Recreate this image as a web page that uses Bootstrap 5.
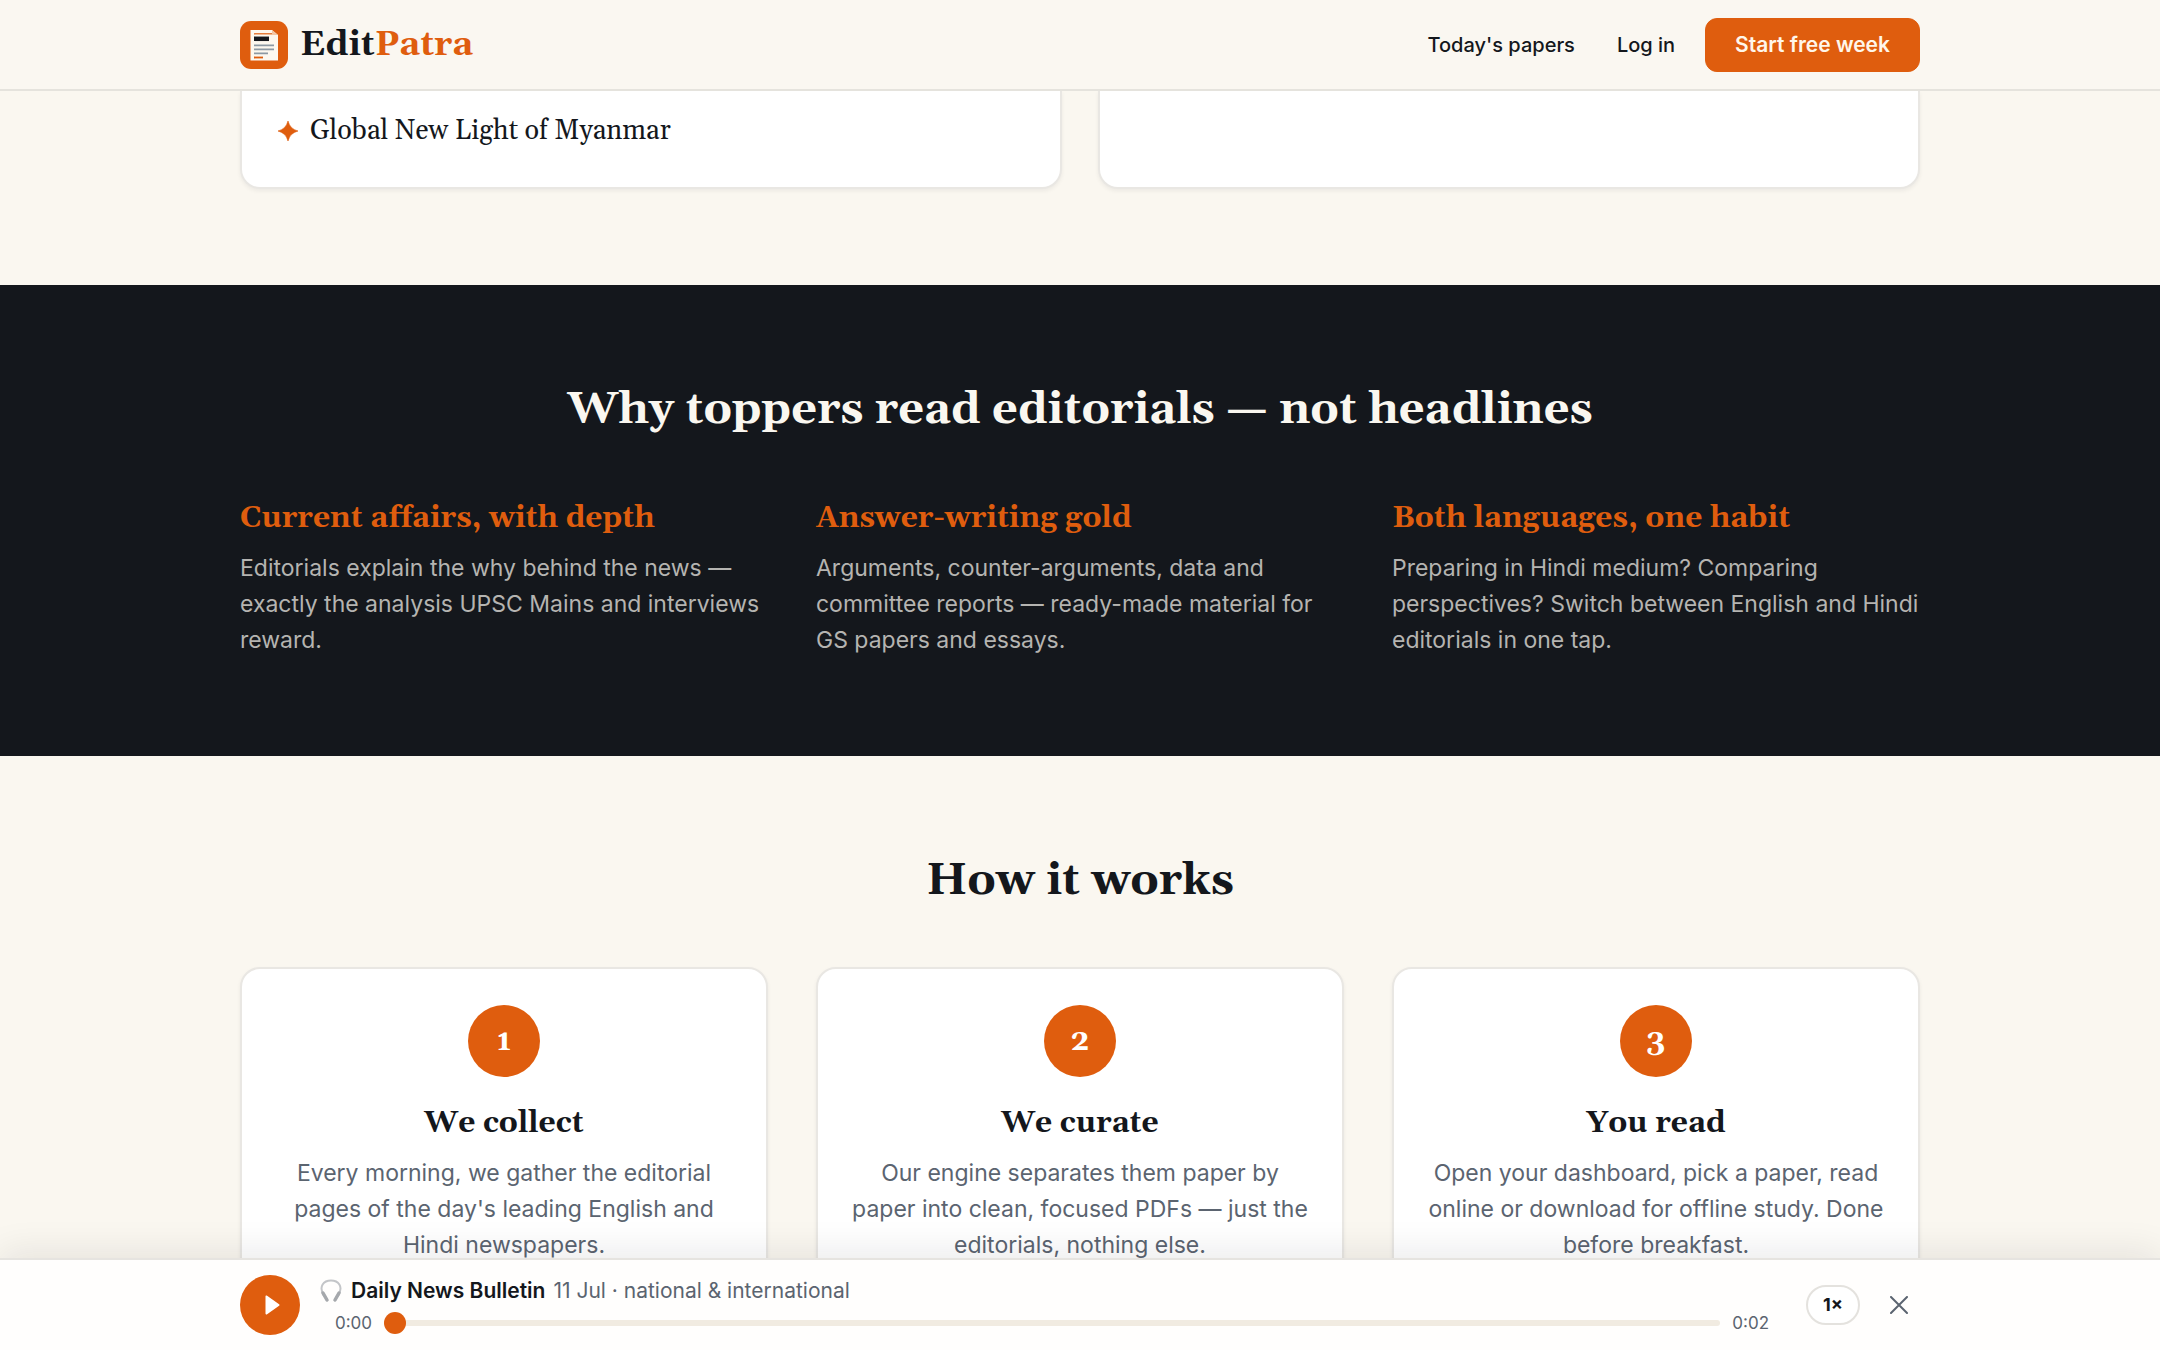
<!DOCTYPE html>
<html lang="en">
<head>
<meta charset="utf-8">
<meta name="viewport" content="width=device-width, initial-scale=1">
<title>EditPatra</title>
<link href="https://cdn.jsdelivr.net/npm/bootstrap@5.3.0/dist/css/bootstrap.min.css" rel="stylesheet">
<style>
:root{--ink:#14171c;--accent:#df5d0e;--paper:#faf7f0;--muted-ink:#5b6470}
body{background:var(--paper);color:var(--ink);font-family:Inter,"Liberation Sans",sans-serif;font-size:23px;line-height:36px}
.wrap{width:100%;max-width:1728px;padding:0 24px;margin:0 auto}
.serif{font-family:Gelasio,Georgia,"Liberation Serif",serif}
.topbar{background:#faf7f1;border-bottom:2px solid #e5e3dd}
.topbar .wrap{min-height:89px}
.brand{font-size:35px;line-height:48px;font-weight:700;color:var(--ink);text-decoration:none}
.brand em{font-style:normal;color:var(--accent)}
.toplink{font-size:20px;line-height:30px;font-weight:500;color:var(--ink);text-decoration:none}
.top-links{gap:42px;margin-right:30px}
.btn-accent{--bs-btn-bg:var(--accent);--bs-btn-color:#fff6ea;--bs-btn-border-color:var(--accent);--bs-btn-hover-bg:#c9520a;--bs-btn-hover-color:#fff;font-size:21px;line-height:30px;font-weight:600;padding:11px 29px;border-radius:12px}
.stage{min-height:0;overflow:auto;scrollbar-width:none}
.stage::-webkit-scrollbar{display:none}
.panel{background:#fff;border:2px solid #e9e7e3;border-radius:20px;box-shadow:0 2px 4px rgba(20,23,28,.06)}
.papers{border-top:0;border-radius:0 0 20px 20px;padding:20px 36px 36px}
.papers li{font-size:27px;line-height:40px}
.gap-papers{--bs-gutter-x:36px}
.gap-cols{--bs-gutter-x:48px}
.first-band{padding-bottom:96px}
.dark-band{background:var(--ink);padding:96px 0 98px}
.dark-band h2{color:var(--paper)}
.dark-band h3{color:var(--accent)}
.dark-band p{color:#b5b4b1}
.big-title{font-size:45px;line-height:58px;font-weight:700;margin:0 0 57px}
.col-title{font-size:30px;line-height:45px;font-weight:700;margin:0 0 9px}
.step{padding:36px 30px}
.step p{color:var(--muted-ink)}
.step-num{width:72px;height:72px;border-radius:50%;background:var(--accent);color:#fff;font-size:30px;font-weight:700;margin:0 auto 24px}
.how-band{padding:96px 0}
.player{background:#fffefd;border-top:2px solid #e6e4e0;box-shadow:0 -6px 36px rgba(20,23,28,.09);z-index:2}
.player .wrap{min-height:90px}
.play-btn{width:60px;height:60px;border-radius:50%;border:0;background:var(--accent);padding:0}
.track{padding:0 37px 0 19px}
.track-title{font-size:21px;line-height:30px}
.track-title strong{font-weight:600}
.muted{color:var(--muted-ink)}
.seek-row{gap:12px;margin-top:5px}
.clock{font-size:17px;line-height:24px;color:var(--muted-ink)}
.seek{-webkit-appearance:none;appearance:none;height:24px;background:transparent;margin:0;min-width:0}
.seek::-webkit-slider-runnable-track{height:6px;border-radius:3px;background:#f1ebe1}
.seek::-webkit-slider-thumb{-webkit-appearance:none;width:22px;height:22px;border-radius:50%;background:var(--accent);margin-top:-8px}
.rate{font-size:18px;line-height:24px;font-weight:700;color:var(--ink);background:#fff;border:2px solid #e4e2de;border-radius:20px;padding:6px 15px}
.close-btn{border:0;background:none;padding:12px;margin-left:18px}
</style>
<script src="https://cdn.jsdelivr.net/npm/bootstrap@5.3.0/dist/js/bootstrap.bundle.min.js"></script>
</head>
<body>
<div class="d-flex flex-column vh-100">
<header class="topbar flex-shrink-0">
  <nav class="wrap d-flex align-items-center justify-content-between">
    <a class="brand serif d-flex align-items-center gap-2" href="#">
      <svg width="48" height="48" viewBox="0 0 48 48" aria-hidden="true" class="me-1"><rect width="48" height="48" rx="11" fill="#df5d0e"/><path d="M10.500 9H32l6 5v25.500H10.500z" fill="#fdf8ef"/><path d="M32 9v5h6z" fill="#f3c7a5"/><path d="M14 12.800h18" stroke="#df5d0e" stroke-width="1.200"/><path d="M14 17.800h15" stroke="#14171c" stroke-width="4.500"/><path d="M14 24.300h20M14 28.300h20M14 32.300h14" stroke="#8d99a3" stroke-width="1.700"/><path d="M14 36.500h9" stroke="#df5d0e" stroke-width="1.800"/></svg>
      <span>Edit<em>Patra</em></span></a>
    <div class="d-flex align-items-center">
      <div class="top-links d-flex">
        <a class="toplink" href="#">Today's papers</a>
        <a class="toplink" href="#">Log in</a>
      </div>
      <button type="button" class="btn btn-accent">Start free week</button>
    </div>
  </nav>
</header>
<main class="stage flex-fill">
  <section class="first-band"><div class="wrap">
    <div class="row gap-papers">
      <div class="col-6"><ul class="panel papers list-unstyled h-100 mb-0 serif"><li class="d-flex align-items-center gap-2">
        <svg width="20" height="20" viewBox="0 0 20 20" aria-hidden="true" class="me-1"><path d="M10 0Q12 8 20 10Q12 12 10 20Q8 12 0 10Q8 8 10 0z" fill="#df5d0e" stroke="#df5d0e" stroke-width=".6" stroke-linejoin="round"/></svg>
        Global New Light of Myanmar</li></ul></div>
      <div class="col-6"><div class="panel papers h-100"></div></div>
    </div></div>
  </section>
  <section class="dark-band"><div class="wrap">
    <h2 class="big-title serif text-center">Why toppers read editorials — not headlines</h2>
    <div class="row gap-cols">
      <div class="col-4"><h3 class="col-title serif">Current affairs, with depth</h3><p class="mb-0">Editorials explain the why behind the news — exactly the analysis UPSC Mains and interviews reward.</p></div>
      <div class="col-4"><h3 class="col-title serif">Answer-writing gold</h3><p class="mb-0">Arguments, counter-arguments, data and committee reports — ready-made material for GS papers and essays.</p></div>
      <div class="col-4"><h3 class="col-title serif">Both languages, one habit</h3><p class="mb-0">Preparing in Hindi medium? Comparing perspectives? Switch between English and Hindi editorials in one tap.</p></div>
    </div></div>
  </section>
  <section class="how-band"><div class="wrap">
    <h2 class="big-title serif text-center">How it works</h2>
    <div class="row gap-cols text-center">
      <div class="col-4"><div class="panel step h-100"><div class="step-num serif d-flex align-items-center justify-content-center">1</div><h3 class="col-title serif">We collect</h3><p class="mb-0">Every morning, we gather the editorial pages of the day's leading English and Hindi newspapers.</p></div></div>
      <div class="col-4"><div class="panel step h-100"><div class="step-num serif d-flex align-items-center justify-content-center">2</div><h3 class="col-title serif">We curate</h3><p class="mb-0">Our engine separates them paper by paper into clean, focused PDFs — just the editorials, nothing else.</p></div></div>
      <div class="col-4"><div class="panel step h-100"><div class="step-num serif d-flex align-items-center justify-content-center">3</div><h3 class="col-title serif">You read</h3><p class="mb-0">Open your dashboard, pick a paper, read online or download for offline study. Done before breakfast.</p></div></div>
    </div></div>
  </section>
</main>
<footer class="player flex-shrink-0">
  <div class="wrap d-flex align-items-center">
    <button type="button" class="play-btn d-flex align-items-center justify-content-center flex-shrink-0" aria-label="Play"><svg width="24" height="24" viewBox="0 0 24 24"><path d="M7.500 3.500v17a1 1 0 0 0 1.600.8l12-8.500a1 1 0 0 0 0-1.600l-12-8.500A1 1 0 0 0 7.500 3.500z" fill="#fff"/></svg></button>
    <div class="track flex-fill">
      <div class="track-title d-flex align-items-center gap-2">
        <svg width="24" height="24" viewBox="0 0 24 24" aria-hidden="true" fill="none"><path d="M5 17C-1 7 5 1.500 12 1.500S25 7 19 17" stroke="#c3c5c8" stroke-width="2"/><path d="M4 14l4 7M20 14l-4 7" stroke="#a5a8ac" stroke-width="3.500" stroke-linecap="round"/></svg>
        <strong>Daily News Bulletin</strong><span class="muted">11 Jul · national &amp; international</span></div>
      <div class="seek-row d-flex align-items-center ps-3"><span class="clock">0:00</span><input type="range" class="seek flex-fill" min="0" max="2" value="0" aria-label="Seek"><span class="clock">0:02</span></div>
    </div>
    <button type="button" class="rate">1×</button>
    <button type="button" class="close-btn d-flex" aria-label="Close player"><svg width="18" height="18" viewBox="0 0 18 18"><path d="M1 1l16 16M17 1L1 17" stroke="#5b6470" stroke-width="2" stroke-linecap="round"/></svg></button>
  </div>
</footer>
</div>
</body>
</html>
